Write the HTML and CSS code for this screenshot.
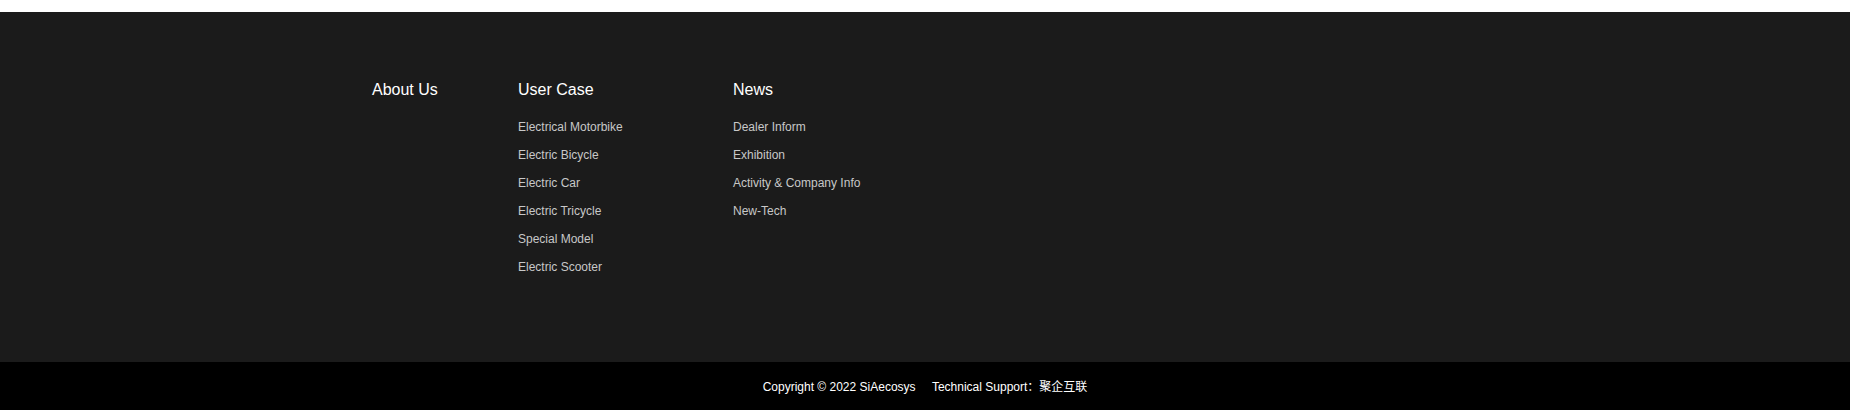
FILE: index.html
```html
<!DOCTYPE html>
<html lang="en">
<head>
  <meta charset="UTF-8" />
  <meta name="viewport" content="width=device-width, initial-scale=1.0" />
  <title>SiAecosys</title>
  <link rel="stylesheet" href="styles.css">
</head>
<body>
  <div class="page-end"></div>
  <footer class="footer">
    <div class="footer-inner">
      <div class="footer-col col-about">
        <h3>About Us</h3>
      </div>
      <div class="footer-col col-case">
        <h3>User Case</h3>
        <ul>
          <li><a href="#">Electrical Motorbike</a></li>
          <li><a href="#">Electric Bicycle</a></li>
          <li><a href="#">Electric Car</a></li>
          <li><a href="#">Electric Tricycle</a></li>
          <li><a href="#">Special Model</a></li>
          <li><a href="#">Electric Scooter</a></li>
        </ul>
      </div>
      <div class="footer-col col-news">
        <h3>News</h3>
        <ul>
          <li><a href="#">Dealer Inform</a></li>
          <li><a href="#">Exhibition</a></li>
          <li><a href="#">Activity &amp; Company Info</a></li>
          <li><a href="#">New-Tech</a></li>
        </ul>
      </div>
    </div>
  </footer>
  <div class="copyright">
    <span>Copyright © 2022 SiAecosys</span>
    <span class="support">Technical Support：聚企互联</span>
  </div>
</body>
</html>
```

FILE: styles.css
```css
body {
  margin: 0;
  background: #fff;
  font-family: "Liberation Sans", Arial, "Noto Sans CJK SC", sans-serif;
}
.page-end {
  height: 12px;
  background: #fff;
}
.footer {
  background-color: #1b1b1b;
  height: 350px;
  box-sizing: border-box;
  padding-top: 69px;
}
.footer-inner {
  width: 1106px;
  margin: 0 auto;
  display: flex;
}
.footer-col h3 {
  margin: 0 0 14px;
  font-size: 16px;
  line-height: 18px;
  font-weight: normal;
  color: #fff;
}
.col-about {
  width: 146px;
}
.col-case {
  width: 215px;
}
.footer-col ul {
  list-style: none;
  margin: 0;
  padding: 0;
}
.footer-col li {
  font-size: 12px;
  line-height: 28px;
}
.footer-col a {
  color: #c8c8c8;
  text-decoration: none;
}
.footer-col a:hover {
  color: #fff;
}
.copyright {
  background: #000;
  height: 48px;
  box-sizing: border-box;
  padding-top: 2px;
  line-height: 46px;
  text-align: center;
  font-size: 12px;
  color: #fff;
}
.copyright .support {
  margin-left: 13px;
}
```
